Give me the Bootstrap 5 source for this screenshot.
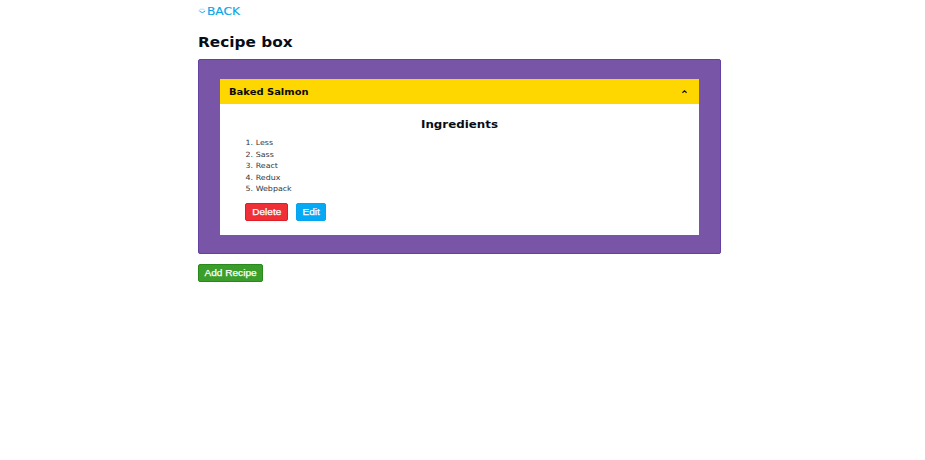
<!DOCTYPE html>
<html lang="en">
<head>
<meta charset="utf-8">
<meta name="viewport" content="width=device-width, initial-scale=1">
<title>Recipe box</title>
<link rel="stylesheet" href="https://cdn.jsdelivr.net/npm/bootstrap@5.3.0/dist/css/bootstrap.min.css">
<style>
body{font-family:"DejaVu Sans",Verdana,sans-serif;background:#fff;color:#070d16;overflow:hidden}
.recipe-page{width:523px;margin-left:198px;padding-top:4px}
.back-link{color:#05a5ea;font-size:10.5px;line-height:14px;height:14px}
.back-text{transform:scaleX(1.16);transform-origin:left;-webkit-text-stroke:.15px currentColor}
.recipe-title{font-size:14px;line-height:20px;margin:14px 0 7px .4px;font-weight:700;transform:scaleX(1.095);transform-origin:left}
.recipe-box{background:#7955a8;border:1px solid #6440a2;border-radius:2px;height:195px;padding:19px 21px 18px}
.recipe-head{background:#ffd700;height:25px;padding:0 12px 0 8.5px;color:#0c0a00;font-size:9.3px;font-weight:700}
.recipe-name{transform:scaleX(1.07);transform-origin:left}
.recipe-body{background:#fff;height:131px;padding:14px 25px 0}
.ingredients-title{font-size:10.6px;line-height:12px;font-weight:700;margin:0 0 7px;transform:scaleX(1.12)}
.ingredients{font-size:7.2px;line-height:11.6px;color:#30363e;padding-left:9.7px;margin:0 0 8px;transform:scaleX(1.1);transform-origin:left}
.recipe-btn{font:500 9.5px/16px "Liberation Sans",Arial,sans-serif;height:18px;padding:0;border-radius:2px;color:#fff;-webkit-text-stroke:.25px #fff}
.btn-label{display:inline-block;transform:scaleX(1.06)}
.btn-delete,.btn-delete:hover{background:#ef3036;border-color:#e01c26;width:42.5px;color:#fff}
.btn-edit,.btn-edit:hover{background:#05a9f4;border-color:#05a4ee;width:30.5px;color:#fff}
.btn-add,.btn-add:hover{background:#3b9e2b;border-color:#288a1c;width:65px;color:#fff;margin-top:10px}
</style>
</head>
<body>
<main class="recipe-page">
  <a href="#" class="back-link d-flex align-items-center text-decoration-none">
    <svg width="9" height="8" viewBox="0 0 9 8" fill="none" stroke="currentColor" stroke-width=".9"><path d="M1.5 4.2q2.8 2.8 5.5.1"/><path d="M.5 4 2.5 2.2h3L7.5 4" opacity=".4"/></svg>
    <span class="back-text">BACK</span>
  </a>
  <h1 class="recipe-title">Recipe box</h1>
  <section class="recipe-box">
    <div class="recipe-head d-flex align-items-center justify-content-between">
      <span class="recipe-name">Baked Salmon</span>
      <svg width="5" height="4" viewBox="0 0 5 4" fill="none" stroke="#171300" stroke-width="1.2"><path d="M.4 2.8 2.5.9 4.6 2.8"/></svg>
    </div>
    <div class="recipe-body">
      <h2 class="ingredients-title text-center">Ingredients</h2>
      <ol class="ingredients">
        <li>Less</li><li>Sass</li><li>React</li><li>Redux</li><li>Webpack</li>
      </ol>
      <div class="d-flex gap-2">
        <button type="button" class="btn recipe-btn btn-delete"><span class="btn-label">Delete</span></button>
        <button type="button" class="btn recipe-btn btn-edit"><span class="btn-label">Edit</span></button>
      </div>
    </div>
  </section>
  <button type="button" class="btn recipe-btn btn-add d-block"><span class="btn-label">Add Recipe</span></button>
</main>
<script src="https://cdn.jsdelivr.net/npm/bootstrap@5.3.0/dist/js/bootstrap.bundle.min.js"></script>
</body>
</html>
